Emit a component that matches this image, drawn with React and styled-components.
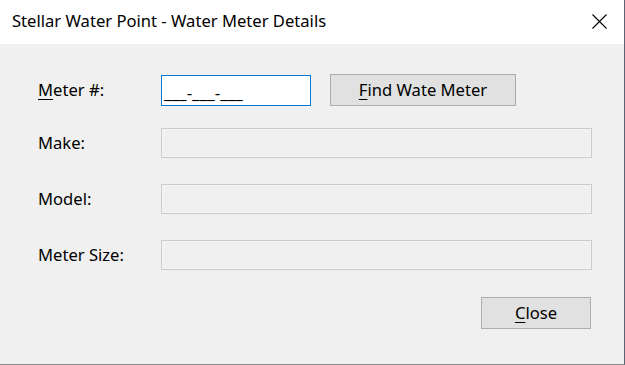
import React from "react";
import styled, { createGlobalStyle } from "styled-components";

const GlobalStyle = createGlobalStyle`
  html, body {
    margin: 0;
    padding: 0;
    background: #f0f0f0;
  }
  * {
    box-sizing: border-box;
  }
`;

const Window = styled.div`
  width: 625px;
  height: 365px;
  display: flex;
  flex-direction: column;
  background: #f0f0f0;
  border-right: 1px solid #5a6470;
  border-bottom: 1px solid #8a8a8a;
  font-family: "Noto Sans", "Open Sans", sans-serif;
  color: #000;
  overflow: hidden;
`;

const TitleBar = styled.div`
  height: 44px;
  flex-shrink: 0;
  background: #fff;
  display: flex;
  align-items: center;
  justify-content: space-between;
  padding: 0 17px 0 12px;
`;

const Title = styled.span`
  font-size: 16.6px;
  line-height: 1;
  padding-bottom: 1px;
`;

const CloseGlyph = styled.svg`
  width: 15px;
  height: 15px;
  margin-bottom: 2px;
`;

const Body = styled.div`
  flex: 1;
  padding: 30px 32px 0 38px;
  display: flex;
  flex-direction: column;
`;

const Row = styled.div`
  display: grid;
  grid-template-columns: 123px 1fr;
  align-items: center;
  height: ${({ $h }) => $h}px;
  margin-top: ${({ $mt }) => $mt || 0}px;
`;

const Label = styled.label`
  font-size: 16.6px;
  line-height: 1;
  padding-top: 1px;
`;

const Key = styled.u`
  text-decoration-thickness: 1px;
  text-underline-offset: 3px;
`;

const Controls = styled.div`
  display: flex;
  align-items: center;
  gap: 19px;
  height: 100%;
`;

const MaskInput = styled.div`
  width: 150px;
  height: 31px;
  margin-top: 1px;
  background: #fff;
  border: 1px solid #0078d7;
  font-size: 17px;
  display: flex;
  align-items: center;
  padding: 3px 0 0 2px;
  white-space: pre;
`;

const Field = styled.div`
  height: 30px;
  background: #f0f0f0;
  border: 1px solid #cccccc;
  box-shadow: inset 0 0 0 1px #f4f4f4;
`;

const Button = styled.button`
  width: ${({ $w }) => $w}px;
  height: 32px;
  background: #e1e1e1;
  border: 1px solid #adadad;
  border-radius: 0;
  font-family: inherit;
  font-size: 16.6px;
  color: #000;
  padding: 0 0 1px;
  display: flex;
  align-items: center;
  justify-content: center;
`;

const Footer = styled.div`
  display: flex;
  justify-content: flex-end;
  margin-top: 27px;
  padding-right: 1px;
`;

function App() {
  return (
    <Window>
      <GlobalStyle />
      <TitleBar>
        <Title>Stellar Water Point - Water Meter Details</Title>
        <CloseGlyph viewBox="0 0 15 15">
          <path d="M0.5 0.5 L14.5 14.5 M14.5 0.5 L0.5 14.5" stroke="#000" strokeWidth="1.1" fill="none" />
        </CloseGlyph>
      </TitleBar>
      <Body>
        <Row $h={32}>
          <Label>
            <Key>M</Key>eter #:
          </Label>
          <Controls>
            <MaskInput>___-___-___</MaskInput>
            <Button $w={186}>
              <span>
                <Key>F</Key>ind Wate Meter
              </span>
            </Button>
          </Controls>
        </Row>
        <Row $h={30} $mt={22}>
          <Label>Make:</Label>
          <Field />
        </Row>
        <Row $h={30} $mt={26}>
          <Label>Model:</Label>
          <Field />
        </Row>
        <Row $h={30} $mt={26}>
          <Label>Meter Size:</Label>
          <Field />
        </Row>
        <Footer>
          <Button $w={110}>
            <span>
              <Key>C</Key>lose
            </span>
          </Button>
        </Footer>
      </Body>
    </Window>
  );
}

export default App;
